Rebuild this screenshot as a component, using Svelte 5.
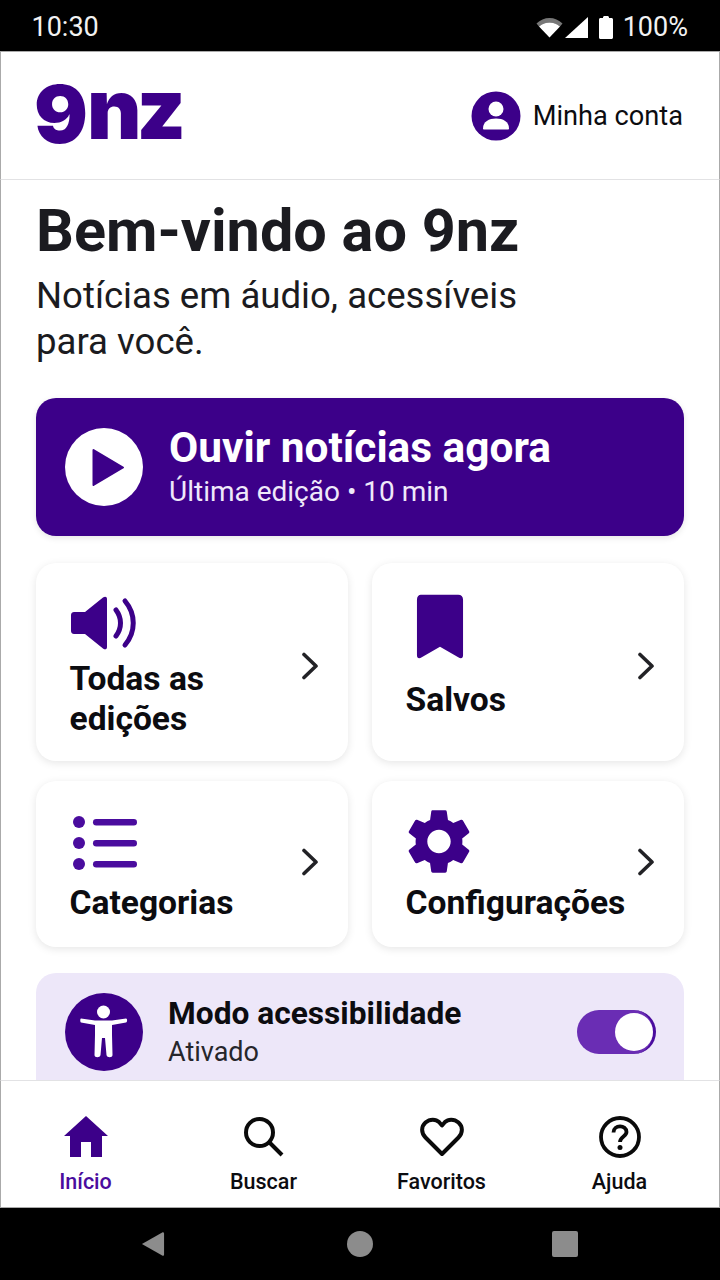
<script>
  const cards = [
    { label: ['Todas as', 'edições'], icon: 'speaker' },
    { label: ['Salvos'], icon: 'bookmark' },
    { label: ['Categorias'], icon: 'list' },
    { label: ['Configurações'], icon: 'gear' }
  ];

  const navItems = [
    { label: 'Início', icon: 'home', active: true },
    { label: 'Buscar', icon: 'search' },
    { label: 'Favoritos', icon: 'heart' },
    { label: 'Ajuda', icon: 'help' }
  ];

  let accessible = true;
</script>

<div class="screen">
  <div class="status-bar">
    <span class="clock">10:30</span>
    <div class="status-right">
      <svg class="wifi" width="27" height="22" viewBox="0 0 27 22">
        <path d="M0.5 7.5C7.5 0 19.5 0 26.5 7.5L24 10.5C18 5 9 5 3 10.5Z" fill="#777" />
        <path d="M3 10.5C9 5 18 5 24 10.5L13.5 21.5Z" fill="#fff" />
      </svg>
      <svg class="signal" width="23" height="21" viewBox="0 0 23 21">
        <path d="M0 21L23 0V21Z" fill="#fff" />
      </svg>
      <svg class="battery" width="14" height="23" viewBox="0 0 14 23">
        <path d="M4 2V1.5C4 .7 4.7 0 5.5 0h3C9.300 0 10 .7 10 1.500V2h2.500C13.300 2 14 2.700 14 3.500V21.500c0 .8-.7 1.500-1.500 1.500h-11C.7 23 0 22.300 0 21.500V3.500C0 2.700.7 2 1.500 2Z" fill="#fff" />
      </svg>
      <span class="percent">100%</span>
    </div>
  </div>

  <header class="app-header">
    <div class="logo"><span class="logo-nine">9</span><span class="logo-rest">nz</span></div>
    <div class="account">
      <svg width="50" height="50" viewBox="0 0 50 50">
        <circle cx="25" cy="25" r="24.500" fill="#3c0089" />
        <circle cx="25" cy="18" r="7.500" fill="#fff" />
        <path d="M12 37.500C12 30.500 18 27.500 25 27.500S38 30.500 38 37.500C38 38.300 37.500 38.500 36.800 38.500H13.200C12.500 38.500 12 38.300 12 37.500Z" fill="#fff" />
      </svg>
      <span>Minha conta</span>
    </div>
  </header>

  <main class="content">
    <h1>Bem-vindo ao 9nz</h1>
    <p class="intro">Notícias em áudio, acessíveis<br />para você.</p>

    <button class="hero">
      <svg width="78" height="78" viewBox="0 0 78 78">
        <circle cx="39" cy="39" r="39" fill="#fff" />
        <path d="M28.500 22L58 39.500 28.500 57Z" fill="#3c0089" stroke="#3c0089" stroke-width="2" stroke-linejoin="round" />
      </svg>
      <div class="hero-text">
        <strong>Ouvir notícias agora</strong>
        <span>Última edição • 10 min</span>
      </div>
    </button>

    <div class="grid">
      {#each cards as card, i}
        <button class="card" class:short={i > 1}>
          <div class="card-body">
            <div class="icon-slot {card.icon}">
              {#if card.icon === 'speaker'}
                <svg width="68" height="56" viewBox="0 0 68 56" fill="none">
                  <path d="M4 17H15L33 2.500C35 1 37 1.500 37 4V52C37 54.500 35 55 33 53.500L15 39H4C2.500 39 1 38 1 36V20C1 18 2.500 17 4 17Z" fill="#3c0089" />
                  <path d="M46 15C52 23 52 33 46 41" stroke="#3c0089" stroke-width="5" stroke-linecap="round" />
                  <path d="M55 6C66 19 66 37 55 50" stroke="#3c0089" stroke-width="5" stroke-linecap="round" />
                </svg>
              {:else if card.icon === 'bookmark'}
                <svg width="48" height="67" viewBox="0 0 50 68">
                  <path d="M5 1H44C47 1 49 3 49 6V64C49 67 47 68 44 66L25 55 6 66C3 68 1 67 1 64V6C1 3 3 1 5 1Z" fill="#3c0089" />
                </svg>
              {:else if card.icon === 'list'}
                <svg width="66" height="56" viewBox="0 0 66 56" fill="#4a0c9e">
                  <circle cx="8" cy="7" r="6" />
                  <circle cx="8" cy="28" r="6" />
                  <circle cx="8" cy="49" r="6" />
                  <rect x="22" y="4" width="44" height="6.500" rx="3.200" />
                  <rect x="22" y="25" width="44" height="6.500" rx="3.200" />
                  <rect x="22" y="46" width="44" height="6.500" rx="3.200" />
                </svg>
              {:else}
                <svg width="62" height="65" viewBox="2.500 2 19 20">
                  <path d="M19.140 12.940c.04-.3.06-.61.06-.94 0-.32-.02-.64-.07-.94l2.030-1.580a.49.49 0 0 0 .12-.61l-1.920-3.320a.488.488 0 0 0-.59-.22l-2.390.96c-.5-.38-1.030-.7-1.620-.94l-.36-2.540a.484.484 0 0 0-.48-.41h-3.840c-.24 0-.43.17-.47.41l-.36 2.540c-.59.24-1.130.57-1.620.94l-2.390-.96c-.22-.08-.47 0-.59.22L2.740 8.870c-.12.21-.08.47.12.61l2.030 1.580c-.05.3-.09.63-.09.94s.02.64.07.94l-2.030 1.580a.49.49 0 0 0-.12.61l1.920 3.320c.12.22.37.29.59.22l2.390-.96c.5.38 1.030.7 1.620.94l.36 2.540c.05.24.24.41.48.41h3.840c.24 0 .44-.17.47-.41l.36-2.540c.59-.24 1.130-.56 1.620-.94l2.390.96c.22.08.47 0 .59-.22l1.920-3.320c.12-.22.07-.47-.12-.61l-2.010-1.580zM12 15.600c-1.980 0-3.600-1.620-3.600-3.600s1.620-3.600 3.600-3.600 3.600 1.620 3.600 3.600-1.620 3.600-3.600 3.600z" fill="#3c0089" />
                </svg>
              {/if}
            </div>
            <div class="card-label">
              {#each card.label as line}<span>{line}</span>{/each}
            </div>
          </div>
          <svg class="chevron" width="18" height="28" viewBox="0 0 18 28" fill="none">
            <path d="M3 2.500L15 14 3 25.500" stroke="#222226" stroke-width="3.600" stroke-linecap="round" stroke-linejoin="round" />
          </svg>
        </button>
      {/each}
    </div>

    <div class="access">
      <svg width="78" height="78" viewBox="0 0 78 78">
        <circle cx="39" cy="39" r="39" fill="#3c0089" />
        <circle cx="38.500" cy="19" r="6.500" fill="#fff" />
        <path d="M16 25.500C15 25.500 15 29 16 29.500L30 32V42L29.500 62C29.500 65 35 65 35.500 62L37 45H40L41.500 62C42 65 47.500 65 47.500 62L47 42V32L61 29.500C62.500 29 62.500 25.500 61 25.500L47 27.500H30Z" fill="#fff" />
      </svg>
      <div class="access-text">
        <strong>Modo acessibilidade</strong>
        <span>{accessible ? 'Ativado' : 'Desativado'}</span>
      </div>
      <button class="toggle" class:on={accessible} aria-label="Modo acessibilidade" on:click={() => (accessible = !accessible)}>
        <span class="knob"></span>
      </button>
    </div>
  </main>

  <nav class="bottom-nav">
    {#each navItems as item}
      <button class="nav-item" class:active={item.active}>
        <span class="nav-icon">
          {#if item.icon === 'home'}
            <svg width="44" height="42" viewBox="0 0 44 42">
              <path d="M22 0L44 20H38V41H27V26H17V41H6V20H0Z" fill="#3c0089" />
            </svg>
          {:else if item.icon === 'search'}
            <svg width="42" height="42" viewBox="0 0 42 42" fill="none" stroke="#0a0a0a" stroke-width="4">
              <circle cx="16.500" cy="16.500" r="13.500" />
              <path d="M26.500 26.500L39 39" />
            </svg>
          {:else if item.icon === 'heart'}
            <svg width="44" height="40" viewBox="0 0 44 40" fill="none" stroke="#0a0a0a" stroke-width="4" stroke-linejoin="round">
              <path d="M22 37L5.500 20.500C1 16 1 9.500 5.500 5.500S16 2 19 5L22 8.500 25 5C28 2 34 1.500 38.500 5.500S43 16 38.500 20.500Z" />
            </svg>
          {:else}
            <svg width="42" height="42" viewBox="0 0 42 42" fill="none">
              <circle cx="21" cy="21" r="19" stroke="#0a0a0a" stroke-width="3.800" />
              <path d="M14.500 16.500C14.500 8.500 27.500 8.500 27.500 16C27.500 20.500 21 20.500 21 26" stroke="#0a0a0a" stroke-width="3.800" />
              <circle cx="21" cy="31.500" r="2.500" fill="#0a0a0a" />
            </svg>
          {/if}
        </span>
        <span class="nav-label">{item.label}</span>
      </button>
    {/each}
  </nav>

  <div class="system-nav">
    <svg class="back" width="24" height="28" viewBox="0 0 26 28"><path d="M1 14L23 1.500C24 1 25 1.500 25 3V25C25 26.500 24 27 23 26.500Z" fill="#8c8c8c" /></svg>
    <svg width="26" height="26" viewBox="0 0 26 26"><circle cx="13" cy="13" r="13" fill="#8c8c8c" /></svg>
    <svg width="26" height="26" viewBox="0 0 26 26"><rect width="26" height="26" rx="2" fill="#8c8c8c" /></svg>
  </div>
</div>

<style>
  :global(body) {
    margin: 0;
    background: #fff;
  }

  .screen {
    width: 720px;
    height: 1280px;
    display: flex;
    flex-direction: column;
    overflow: hidden;
    font-family: Roboto, "Liberation Sans", sans-serif;
    color: #1b1b20;
    background: #fff;
  }

  button {
    font: inherit;
    color: inherit;
    border: none;
    cursor: pointer;
    text-align: left;
  }

  svg {
    display: block;
    flex-shrink: 0;
  }

  .status-bar {
    height: 51px;
    flex-shrink: 0;
    background: #000;
    color: #f2f2f2;
    display: flex;
    align-items: center;
    justify-content: space-between;
    padding: 3px 32px 0 31.500px;
    font-size: 27px;
    box-sizing: border-box;
  }

  .status-right {
    display: flex;
    align-items: center;
  }

  .wifi {
    margin-right: 2px;
  }

  .signal {
    margin-right: 11px;
  }

  .battery {
    margin-right: 10px;
  }

  .app-header {
    height: 129px;
    flex-shrink: 0;
    box-sizing: border-box;
    display: flex;
    align-items: center;
    justify-content: space-between;
    padding: 0 36px 0 33px;
    border-bottom: 1px solid #e2e2e4;
    border-top: 1px solid #aaa;
    border-inline: 1px solid #aaa;
  }

  .logo {
    color: #3c0089;
    font-family: Inter, "Noto Sans", sans-serif;
    font-weight: 900;
    line-height: 1;
    white-space: nowrap;
    margin-top: -10px;
  }

  .logo-nine {
    font-size: 80px;
    letter-spacing: -1px;
    vertical-align: -4px;
  }

  .logo-rest {
    font-size: 84px;
    letter-spacing: -5px;
  }

  .account {
    display: flex;
    align-items: center;
    gap: 12px;
    font-size: 27.2px;
    color: #0c0c10;
    padding-top: 1px;
  }

  .content {
    flex: 1;
    min-height: 0;
    overflow: hidden;
    padding: 0 35px;
    border-inline: 1px solid #aaa;
  }

  h1 {
    margin: 18px 0 0;
    font-size: 59.4px;
    line-height: 66px;
    font-weight: 700;
  }

  .intro {
    margin: 9px 0 0;
    font-size: 36.6px;
    line-height: 46px;
  }

  .hero {
    width: 648px;
    height: 138px;
    margin: 33px 0 0;
    background: #3c0089;
    color: #fff;
    border-radius: 20px;
    display: flex;
    align-items: center;
    gap: 26px;
    padding: 0 29px;
    box-shadow: 0 2px 6px rgb(0 0 0 / 0.1);
  }

  .hero-text {
    display: flex;
    flex-direction: column;
  }

  .hero-text strong {
    font-size: 42.4px;
    line-height: 50px;
    font-weight: 700;
    margin-top: -2px;
  }

  .hero-text span {
    font-size: 28px;
    line-height: 36px;
    color: #efe9fa;
    margin-top: 1px;
  }

  .grid {
    display: grid;
    grid-template-columns: 312px 312px;
    grid-template-rows: 198px 166px;
    gap: 20px 24px;
    margin: 27px 0 0;
  }

  .card {
    background: #fff;
    border-radius: 20px;
    box-shadow: 0 2px 8px rgb(0 0 0 / 0.1);
    display: flex;
    align-items: flex-start;
    padding: 30px 29px 0 33.500px;
  }

  .card.short {
    padding-top: 28px;
  }

  .card-body {
    flex: 1;
    min-width: 0;
    margin-right: -20px;
  }

  .icon-slot.speaker {
    height: 66px;
    padding-top: 2px;
    box-sizing: border-box;
  }

  .icon-slot.bookmark {
    height: 87px;
    padding-left: 10px;
    box-sizing: border-box;
  }

  .icon-slot.list {
    height: 74px;
    padding-top: 6px;
    padding-left: 1px;
    box-sizing: border-box;
  }

  .icon-slot.gear {
    height: 74px;
    padding-left: 2px;
    box-sizing: border-box;
  }

  .card-label {
    font-size: 33.6px;
    line-height: 40px;
    font-weight: 700;
    color: #0c0c10;
    white-space: nowrap;
  }

  .card-label span {
    display: block;
  }

  .chevron {
    align-self: center;
    margin-top: -22px;
  }

  .short .chevron {
    margin-top: -32px;
  }

  .access {
    width: 648px;
    height: 120px;
    box-sizing: border-box;
    margin: 26px 0 0;
    background: #ede7f9;
    border-radius: 20px 20px 0 0;
    display: flex;
    align-items: flex-start;
    padding: 20px 28px 0 29px;
  }

  .access-text {
    flex: 1;
    display: flex;
    flex-direction: column;
    margin-left: 25px;
  }

  .access-text strong {
    font-size: 31.7px;
    line-height: 42px;
    font-weight: 700;
    color: #0c0c10;
  }

  .access-text span {
    font-size: 27px;
    line-height: 34px;
    color: #26262b;
  }

  .toggle {
    width: 79px;
    height: 44px;
    margin-top: 17px;
    border-radius: 22px;
    background: #6a2db4;
    padding: 0;
    display: flex;
    align-items: center;
    justify-content: flex-start;
  }

  .toggle.on {
    justify-content: flex-end;
    border-right: 3px solid #4a0c9e;
  }

  .knob {
    width: 38px;
    height: 38px;
    border-radius: 50%;
    background: #fff;
  }

  .bottom-nav {
    height: 128px;
    flex-shrink: 0;
    box-sizing: border-box;
    border-top: 1px solid #e2e2e4;
    border-bottom: 1px solid #aaa;
    border-inline: 1px solid #aaa;
    background: #fff;
    display: grid;
    grid-template-columns: repeat(4, 178px);
  }

  .nav-item {
    background: none;
    display: flex;
    flex-direction: column;
    align-items: center;
    padding: 33px 0 0;
    margin-left: -9px;
  }

  .nav-icon {
    height: 46px;
    display: flex;
    align-items: center;
  }

  .nav-label {
    margin-top: 9px;
    font-size: 21.5px;
    line-height: 26px;
    font-weight: 500;
    color: #0c0c10;
  }

  .active .nav-label {
    color: #4a0c9e;
  }

  .system-nav {
    height: 72px;
    flex-shrink: 0;
    background: #000;
    display: flex;
    align-items: center;
    padding-left: 141px;
    gap: 179px;
  }

  .back {
    margin-right: 3px;
  }
</style>
